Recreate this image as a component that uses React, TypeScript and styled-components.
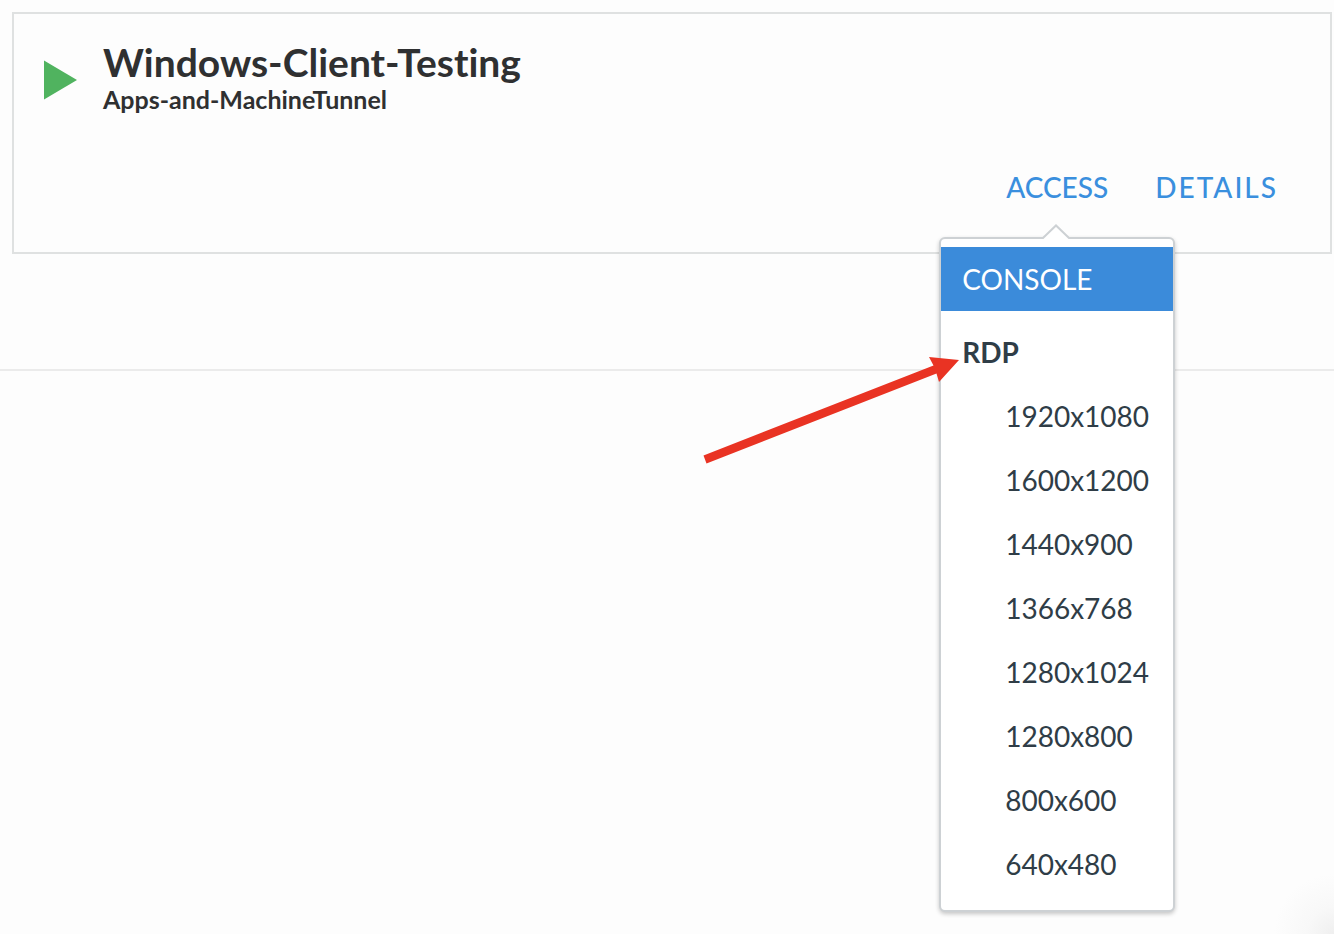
import React from "react";
import styled, { createGlobalStyle } from "styled-components";

const GlobalStyle = createGlobalStyle`
  *, *::before, *::after { box-sizing: border-box; }
  html, body, #root { height: 100%; }
  body {
    margin: 0;
    background: #fdfdfd;
    color: #2f3031;
    font-family: Lato, "Liberation Sans", sans-serif;
    font-variant-ligatures: none;
    overflow: hidden;
  }
`;

const Page = styled.main`
  position: relative;
  min-height: 100%;
  overflow: hidden;
`;

const CardSection = styled.section`
  padding: 12px 2px 115px 12px;
  border-bottom: 2px solid #ebebeb;
`;

const Card = styled.article`
  display: flex;
  flex-direction: column;
  justify-content: space-between;
  min-height: 242px;
  padding: 26px 52px 47px 30px;
  border: 2px solid #dfe1e1;
`;

const CardHeader = styled.header`
  display: flex;
  align-items: flex-start;
  gap: 26px;
`;

const PlayIcon = styled.svg`
  width: 33px;
  height: 40px;
  flex: none;
  margin-top: 20px;
  fill: #50b35f;
`;

const Title = styled.h1`
  margin: 0;
  font-size: 39px;
  line-height: 44px;
  font-weight: 700;
`;

const Subtitle = styled.p`
  margin: 0;
  font-size: 25px;
  line-height: 30px;
  font-weight: 700;
`;

const Actions = styled.div`
  display: flex;
  justify-content: flex-end;
  gap: 47px;
`;

const Dropdown = styled.div`
  position: relative;
`;

const ActionButton = styled.button<{ $tracked?: boolean }>`
  display: block;
  padding: 0;
  border: 0;
  background: none;
  color: #3a8fde;
  font: 500 28px/36px Lato, "Liberation Sans", sans-serif;
  letter-spacing: ${({ $tracked }) => ($tracked ? "2px" : "normal")};
  cursor: pointer;
`;

const Menu = styled.div`
  position: absolute;
  z-index: 1;
  top: 68px;
  left: 50%;
  width: 236px;
  padding: 8px 0 14px;
  transform: translateX(-50%);
  border: 2px solid #cdd1d4;
  border-radius: 6px;
  background: #fff;
  box-shadow: 0 2px 4px rgba(0, 0, 0, 0.22);
`;

const Caret = styled.svg`
  position: absolute;
  bottom: 100%;
  left: 50%;
  width: 28px;
  height: 15px;
  margin-left: -15px;
  fill: #fff;
  stroke: #cdd1d4;
  stroke-width: 2;
  overflow: hidden;
`;

const MenuItem = styled.button<{ $active?: boolean; $nested?: boolean }>`
  display: block;
  width: 100%;
  height: 64px;
  padding: 0 0 0 ${({ $nested }) => ($nested ? "64px" : "21px")};
  border: 0;
  background: ${({ $active }) => ($active ? "#3b8bda" : "transparent")};
  color: ${({ $active }) => ($active ? "#fff" : "#2f3d47")};
  font: 400 28px/64px Lato, "Liberation Sans", sans-serif;
  text-align: left;
  white-space: nowrap;
  cursor: pointer;
`;

const Group = styled.div`
  padding-top: 9px;
`;

const GroupLabel = styled.div`
  position: relative;
  padding-left: 21px;
  color: #2f3d47;
  font-size: 28px;
  line-height: 64px;
  font-weight: 700;
`;

const Pointer = styled.svg`
  position: absolute;
  top: 32px;
  right: 100%;
  width: 260px;
  height: 112px;
  margin-right: -18px;
  fill: #e93323;
  pointer-events: none;
`;

const CornerShade = styled.div`
  position: absolute;
  right: 0;
  bottom: 0;
  width: 60px;
  height: 60px;
  background: radial-gradient(circle 60px at 100% 100%, #efefef, #f8f8f8 45%, #fdfdfd);
`;

const resolutions = [
  "1920x1080",
  "1600x1200",
  "1440x900",
  "1366x768",
  "1280x1024",
  "1280x800",
  "800x600",
  "640x480",
];

export default function App() {
  return (
    <>
      <GlobalStyle />
      <Page>
        <CardSection>
          <Card>
            <CardHeader>
              <PlayIcon viewBox="0 0 33 40" aria-hidden="true">
                <path d="M0 0.5 33 20 0 39.5Z" />
              </PlayIcon>
              <div>
                <Title>Windows-Client-Testing</Title>
                <Subtitle>Apps-and-MachineTunnel</Subtitle>
              </div>
            </CardHeader>
            <Actions>
              <Dropdown>
                <ActionButton type="button" aria-haspopup="menu" aria-expanded="true">
                  ACCESS
                </ActionButton>
                <Menu role="menu">
                  <Caret viewBox="0 0 28 15" aria-hidden="true">
                    <path d="M0 15 14 1.5 28 15" />
                  </Caret>
                  <MenuItem type="button" role="menuitem" $active>
                    CONSOLE
                  </MenuItem>
                  <Group role="group" aria-labelledby="rdp-label">
                    <GroupLabel>
                      <span id="rdp-label">RDP</span>
                      <Pointer viewBox="0 0 260 112" aria-hidden="true">
                        <path d="M4.500 103.500 234.500 13.500 230 5 260 8 240 30 237.500 21.500 7.500 111.500Z" />
                      </Pointer>
                    </GroupLabel>
                    {resolutions.map((resolution) => (
                      <MenuItem key={resolution} type="button" role="menuitem" $nested>
                        {resolution}
                      </MenuItem>
                    ))}
                  </Group>
                </Menu>
              </Dropdown>
              <ActionButton type="button" $tracked>
                DETAILS
              </ActionButton>
            </Actions>
          </Card>
        </CardSection>
        <CornerShade />
      </Page>
    </>
  );
}
